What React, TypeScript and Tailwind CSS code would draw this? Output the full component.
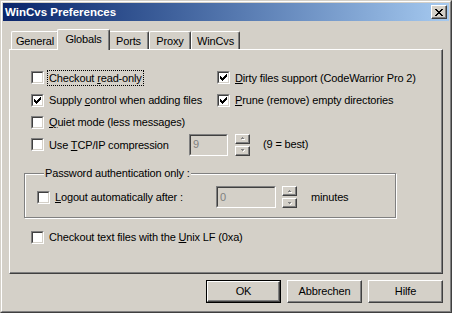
import React from "react";

const CHECK =
  "M6 0h1v1h-1z M5 1h2v1h-2z M0 2h1v1h-1z M4 2h3v1h-3z M0 3h2v1h-2z M3 3h3v1h-3z M0 4h5v1h-5z M1 5h3v1h-3z M2 6h1v1h-1z";

const XMARK =
  "M0 0h2v1h-2z M6 0h2v1h-2z M1 1h2v1h-2z M5 1h2v1h-2z M2 2h4v1h-4z M3 3h2v1h-2z M2 4h4v1h-4z M1 5h2v1h-2z M5 5h2v1h-2z M0 6h2v1h-2z M6 6h2v1h-2z";

function Check({ checked }: { checked?: boolean }) {
  return (
    <span className="flex w-[13px] h-[13px] shrink-0 border border-t-[#808080] border-l-[#808080] border-b-white border-r-white">
      <span className="flex flex-1 items-center justify-center bg-white border border-t-[#404040] border-l-[#404040] border-b-[#d4d0c8] border-r-[#d4d0c8]">
        {checked && (
          <svg width="7" height="7" viewBox="0 0 7 7" shapeRendering="crispEdges">
            <path d={CHECK} fill="#000" />
          </svg>
        )}
      </span>
    </span>
  );
}

function Option({
  checked,
  focused,
  children,
}: {
  checked?: boolean;
  focused?: boolean;
  children: React.ReactNode;
}) {
  return (
    <div className="flex items-center">
      <Check checked={checked} />
      <span
        className={
          "ml-[3px] px-[1px] leading-[14px] whitespace-nowrap border " +
          (focused ? "border-dotted border-black" : "border-transparent")
        }
      >
        {children}
      </span>
    </div>
  );
}

function Edit({ value, w }: { value: string; w: string }) {
  return (
    <div className={"flex h-[22px] border border-t-[#808080] border-l-[#808080] border-b-white border-r-white " + w}>
      <div className="flex flex-1 items-center pl-[2px] bg-[#d4d0c8] text-[#808080] border border-t-[#404040] border-l-[#404040] border-b-[#d4d0c8] border-r-[#d4d0c8]">
        {value}
      </div>
    </div>
  );
}

function Arrow({ up }: { up?: boolean }) {
  return (
    <svg width="4" height="3" viewBox="0 0 4 3" shapeRendering="crispEdges">
      <path d={up ? "M1 0h1v1h-1z M0 1h3v1h-3z" : "M0 0h3v1h-3z M1 1h1v1h-1z"} fill="#808080" />
      <path d={up ? "M1 2h3v1h-3z" : "M2 2h1v1h-1z M3 1h1v1h-1z"} fill="#fff" />
    </svg>
  );
}

function Spin() {
  return (
    <div className="flex flex-col gap-[2px] w-[15px] h-[22px]">
      {[true, false].map((up) => (
        <div
          key={String(up)}
          className="flex h-[10px] items-center justify-center border border-t-white border-l-white border-b-[#404040] border-r-[#404040] shadow-[inset_-1px_-1px_0_#808080]"
        >
          <Arrow up={up} />
        </div>
      ))}
    </div>
  );
}

function Button({ children, def }: { children: React.ReactNode; def?: boolean }) {
  const inner =
    "flex flex-1 items-center justify-center border border-t-white border-l-white border-b-[#404040] border-r-[#404040] shadow-[inset_-1px_-1px_0_#808080]";
  if (def) {
    return (
      <div className="flex w-[75px] h-[23px] border border-black">
        <div className={inner}>{children}</div>
      </div>
    );
  }
  return (
    <div className="flex w-[75px] h-[23px]">
      <div className={inner}>{children}</div>
    </div>
  );
}

const tabs = [
  { label: "General", w: "w-[48px]" },
  { label: "Globals", w: "w-[53px]", active: true },
  { label: "Ports", w: "w-[41px]" },
  { label: "Proxy", w: "w-[42px]" },
  { label: "WinCvs", w: "w-[49px]" },
];

export default function App() {
  return (
    <div className="w-[452px] h-[313px] bg-[#d4d0c8] text-black text-[11px] leading-[13px] tracking-[-0.15px] font-['Liberation_Sans',Arial,sans-serif] border border-t-[#d4d0c8] border-l-[#d4d0c8] border-b-[#404040] border-r-[#404040]">
      <div className="flex flex-col h-full border border-t-white border-l-white border-b-[#808080] border-r-[#808080] p-[1px]">
        {/* title bar */}
        <div className="flex h-[18px] items-center justify-between bg-linear-to-r from-[#0a246a] to-[#a6caf0]">
          <span className="pl-[2px] text-white font-bold text-[11.5px] tracking-normal">WinCvs Preferences</span>
          <div className="flex w-[16px] h-[14px] mr-[2px] items-center justify-center bg-[#d4d0c8] border border-t-white border-l-white border-b-[#404040] border-r-[#404040] shadow-[inset_-1px_-1px_0_#808080]">
            <svg width="8" height="7" viewBox="0 0 8 7" shapeRendering="crispEdges">
              <path d={XMARK} fill="#000" />
            </svg>
          </div>
        </div>

        <div className="flex flex-col flex-1 px-[6px] pt-[8px]">
          {/* tabs */}
          <div className="flex items-end h-[20px] pl-[2px]">
            {tabs.map((t) =>
              t.active ? (
                <div
                  key={t.label}
                  className={
                    "relative z-10 -mx-[2px] -mb-[1px] h-[21px] flex justify-center pt-[3px] bg-[#d4d0c8] rounded-t-[2px] border-t border-l border-r border-t-white border-l-white border-r-[#404040] shadow-[inset_-1px_0_0_#808080] " +
                    t.w
                  }
                >
                  {t.label}
                </div>
              ) : (
                <div
                  key={t.label}
                  className={
                    "h-[18px] flex justify-center pt-[3px] rounded-t-[2px] border-t border-l border-r border-t-white border-l-white border-r-[#404040] shadow-[inset_-1px_0_0_#808080] " +
                    t.w
                  }
                >
                  {t.label}
                </div>
              )
            )}
          </div>

          {/* panel */}
          <div className="w-[434px] h-[225px] border border-t-white border-l-white border-b-[#404040] border-r-[#404040] shadow-[inset_-1px_-1px_0_#808080] pt-[16px] pl-[21px]">
            <div className="flex h-[23px] items-center">
              <div className="w-[186px]">
                <Option focused>
                  Checkout <u>r</u>ead-only
                </Option>
              </div>
              <Option checked>
                <u>D</u>irty files support (CodeWarrior Pro 2)
              </Option>
            </div>
            <div className="flex h-[22px] items-center">
              <div className="w-[186px]">
                <Option checked>
                  Supply <u>c</u>ontrol when adding files
                </Option>
              </div>
              <Option checked>
                <u>P</u>rune (remove) empty directories
              </Option>
            </div>
            <div className="flex h-[22px] items-center">
              <Option>
                <u>Q</u>uiet mode (less messages)
              </Option>
            </div>
            <div className="flex h-[23px] items-center">
              <div className="w-[158px]">
                <Option>
                  Use <u>T</u>CP/IP compression
                </Option>
              </div>
              <Edit value="9" w="w-[39px]" />
              <div className="ml-[7px]">
                <Spin />
              </div>
              <span className="ml-[13px]">(9 = best)</span>
            </div>

            <fieldset className="w-[372px] -ml-[7px] mt-[11px] border border-[#808080] shadow-[inset_1px_1px_0_#fff,1px_1px_0_#fff] pl-[12px] pb-[9px]">
              <legend className="ml-[7px] px-[1px] bg-[#d4d0c8] leading-[13px]">
                Password authentication only :
              </legend>
              <div className="flex h-[22px] items-center mt-[6px]">
                <div className="w-[179px]">
                  <Option>
                    <u>L</u>ogout automatically after :
                  </Option>
                </div>
                <Edit value="0" w="w-[60px]" />
                <div className="ml-[6px]">
                  <Spin />
                </div>
                <span className="ml-[14px]">minutes</span>
              </div>
            </fieldset>

            <div className="flex h-[22px] items-center mt-[8px]">
              <Option>
                Checkout text files with the <u>U</u>nix LF (0xa)
              </Option>
            </div>
          </div>

          {/* buttons */}
          <div className="flex justify-end gap-[6px] mt-[6px]">
            <Button def>OK</Button>
            <Button>Abbrechen</Button>
            <Button>Hilfe</Button>
          </div>
        </div>
      </div>
    </div>
  );
}
